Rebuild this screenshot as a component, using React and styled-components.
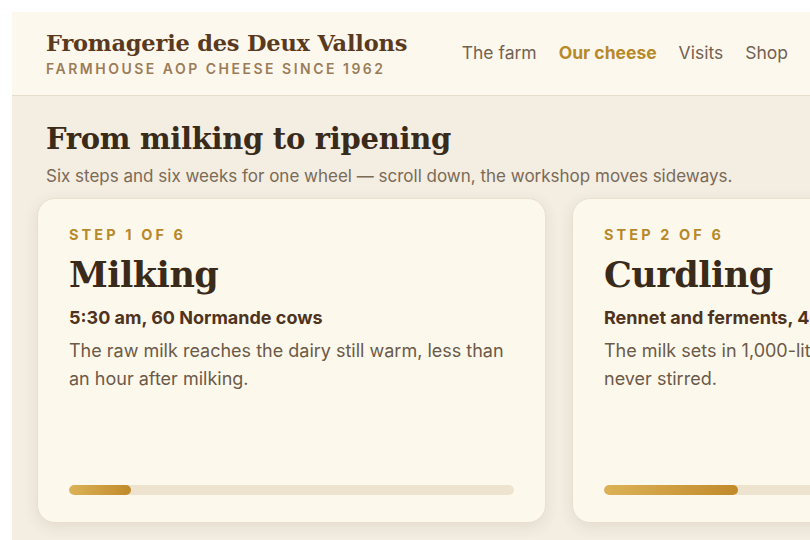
import styled, { createGlobalStyle } from "styled-components";

const GlobalStyle = createGlobalStyle`
    html, body {
        margin: 0;
        background: #ffffff;
        overflow: hidden;
    }
    body {
        padding: 12px 0 0 12px;
    }
`

const serif = `"DejaVu Serif", Georgia, serif`
const sans = `Inter, "Noto Sans", sans-serif`

const Frame = styled.div`
    width: 798px;
    height: 528px;
    background-color: #f3ede2;
    overflow: hidden;
`

const Header = styled.header`
    height: 84px;
    box-sizing: border-box;
    padding: 0 22px 3px 34px;
    display: flex;
    align-items: center;
    justify-content: space-between;
    background-color: #fdf8ee;
    border-bottom: 1px solid #e6ddcd;
`

const Brand = styled.div`
    display: flex;
    flex-direction: column;
    gap: 4px;
    padding-top: 2px;
`

const BrandName = styled.div`
    font-family: ${serif};
    font-weight: bold;
    font-size: 22.5px;
    color: #5a3a1e;
    letter-spacing: -0.2px;
`

const Tagline = styled.div`
    font-family: ${sans};
    font-weight: 600;
    font-size: 14px;
    letter-spacing: 2.5px;
    color: #9a7d58;
`

const Nav = styled.nav`
    display: flex;
    gap: 22px;
`

const NavLink = styled.a`
    font-family: ${sans};
    font-size: 17.5px;
    font-weight: ${p => (p.$active ? 700 : 400)};
    color: ${p => (p.$active ? "#b8892a" : "#736250")};
    text-decoration: none;
`

const Main = styled.main`
    padding: 21px 0 0 25px;
`

const Intro = styled.div`
    padding-left: 9px;
`

const Title = styled.h2`
    margin: 0;
    font-family: ${serif};
    font-weight: bold;
    font-size: 29px;
    line-height: 44px;
    color: #3a2a1a;
    letter-spacing: -0.3px;
`

const Lead = styled.p`
    margin: 5px 0 0;
    font-family: ${sans};
    font-size: 17px;
    color: #7a6a56;
    white-space: nowrap;
`

const Track = styled.div`
    display: flex;
    gap: 26px;
    margin-top: 12px;
`

const Card = styled.article`
    flex: 0 0 509px;
    height: 325px;
    box-sizing: border-box;
    padding: 27px 31px 0;
    display: flex;
    flex-direction: column;
    background-color: #fdf8ec;
    border: 1px solid #e8dfcf;
    border-radius: 18px;
    box-shadow: 0 4px 14px rgba(120, 95, 55, 0.12);
`

const Step = styled.div`
    font-family: ${sans};
    font-weight: 700;
    font-size: 14.5px;
    letter-spacing: 3.1px;
    color: #b8892a;
`

const CardTitle = styled.h3`
    margin: 9px 0 0;
    font-family: ${serif};
    font-weight: bold;
    font-size: 35px;
    line-height: 46px;
    color: #3a2a1a;
    letter-spacing: -0.5px;
`

const Meta = styled.div`
    margin-top: 9px;
    font-family: ${sans};
    font-weight: 700;
    font-size: 18px;
    color: #4e331d;
    white-space: nowrap;
`

const Body = styled.p`
    margin: 9px 0 0;
    font-family: ${sans};
    font-size: 18px;
    line-height: 28px;
    color: #6b5a48;
`

const Progress = styled.div`
    margin-top: auto;
    margin-bottom: 27px;
    height: 10px;
    border-radius: 5px;
    background-color: #eee3cf;
    overflow: hidden;
`

const Fill = styled.div`
    height: 100%;
    border-radius: 5px;
    background: linear-gradient(90deg, #dcb257, #c18a2b);
`

const steps = [
    {
        n: 1,
        title: "Milking",
        meta: "5:30 am, 60 Normande cows",
        text: "The raw milk reaches the dairy still warm, less than an hour after milking.",
        pct: 14,
    },
    {
        n: 2,
        title: "Curdling",
        meta: "Rennet and ferments, 40 minutes",
        text: "The milk sets in 1,000-litre vats and the curd is never stirred.",
        pct: 30,
    },
]

function App() {
    return (
        <Frame>
            <GlobalStyle />
            <Header>
                <Brand>
                    <BrandName>Fromagerie des Deux Vallons</BrandName>
                    <Tagline>FARMHOUSE AOP CHEESE SINCE 1962</Tagline>
                </Brand>
                <Nav>
                    <NavLink href="#">The farm</NavLink>
                    <NavLink href="#" $active>Our cheese</NavLink>
                    <NavLink href="#">Visits</NavLink>
                    <NavLink href="#">Shop</NavLink>
                </Nav>
            </Header>
            <Main>
                <Intro>
                    <Title>From milking to ripening</Title>
                    <Lead>Six steps and six weeks for one wheel — scroll down, the workshop moves sideways.</Lead>
                </Intro>
                <Track>
                    {steps.map(s => (
                        <Card key={s.n}>
                            <Step>STEP {s.n} OF 6</Step>
                            <CardTitle>{s.title}</CardTitle>
                            <Meta>{s.meta}</Meta>
                            <Body>{s.text}</Body>
                            <Progress>
                                <Fill style={{ width: `${s.pct}%` }} />
                            </Progress>
                        </Card>
                    ))}
                </Track>
            </Main>
        </Frame>
    )
}

export default App;
